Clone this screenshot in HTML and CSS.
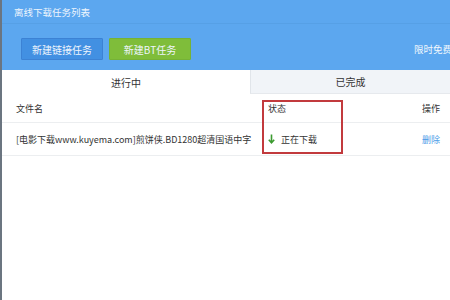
FILE: index.html
```html
<!DOCTYPE html>
<html lang="zh-CN">
<head>
    <meta charset="UTF-8">
    <title>离线下载任务列表</title>
    <link rel="stylesheet" href="styles.css">
</head>
<body>
    <div class="page">
        <header class="top">
            <div class="top-title">离线下载任务列表</div>
            <div class="toolbar">
                <button class="btn btn-blue">新建链接任务</button>
                <button class="btn btn-green">新建BT任务</button>
                <span class="free">限时免费</span>
            </div>
        </header>

        <div class="tabs">
            <div class="tab active">进行中</div>
            <div class="tab">已完成</div>
        </div>

        <div class="task-table">
            <div class="row head">
                <span class="col-name">文件名</span>
                <span class="col-status">状态</span>
                <span class="col-op">操作</span>
            </div>
            <div class="row">
                <span class="col-name">[电影下载www.kuyema.com]煎饼侠.BD1280超清国语中字</span>
                <span class="col-status">
                    <svg class="arrow" width="7" height="10" viewBox="0 0 7 10">
                        <path d="M3.5 0.5 V8.5 M0.8 5.8 L3.5 8.8 L6.2 5.8" fill="none" stroke="#3b9a2f" stroke-width="1.6"/>
                    </svg>
                    正在下载
                </span>
                <span class="col-op"><a class="del">删除</a></span>
            </div>
            <div class="mark"></div>
        </div>
    </div>
</body>
</html>
```

FILE: styles.css
```css
body {
    margin: 0;
    padding: 0;
    font-family: "Noto Sans CJK SC", "Noto Sans", sans-serif;
    font-size: 9.5px;
    color: #333;
    background: #fff;
}

.page {
    width: 448px;
    height: 300px;
    border-left: 2px solid #6b7580;
    overflow: hidden;
}

.top {
    background-color: #5ca7ef;
    height: 70px;
}

.top-title {
    height: 23px;
    line-height: 25px;
    padding-left: 12px;
    color: #eef5fd;
    border-bottom: 1px solid #56a0e6;
}

.toolbar {
    display: flex;
    align-items: center;
    gap: 6px;
    padding: 14px 0 0 19px;
}

.btn {
    width: 82px;
    height: 22px;
    font-family: inherit;
    font-size: 10px;
    color: #eef5fd;
    border-radius: 1px;
    padding: 0;
}

.btn-blue {
    background-color: #4290e2;
    border: 1px solid #3c82d4;
}

.btn-green {
    background-color: #7fbd3a;
    border: 1px solid #76b236;
}

.free {
    margin-left: auto;
    margin-right: -2px;
    color: #f2f7fd;
    font-size: 9.5px;
}

.tabs {
    display: grid;
    grid-template-columns: 248px 1fr;
    height: 24px;
}

.tab {
    display: flex;
    align-items: center;
    justify-content: center;
    font-size: 10px;
    background-color: #f1f4f8;
    border-left: 1px solid #e1e5ea;
    border-bottom: 1px solid #e6e9ed;
}

.tab.active {
    background-color: #fff;
    border: none;
}

.task-table {
    position: relative;
    font-size: 9px;
}

.row {
    display: grid;
    grid-template-columns: 252px 154px 1fr;
    align-items: center;
    height: 32px;
    padding-left: 14px;
    border-bottom: 1px solid #eceef0;
}

.row.head {
    height: 28px;
}

.col-status {
    display: flex;
    align-items: center;
    gap: 6px;
}

.arrow {
    display: block;
}

.del {
    color: #4c9be8;
}

/* annotation box drawn over the status column */
.mark {
    position: absolute;
    left: 260px;
    top: 6px;
    width: 77px;
    height: 50px;
    border: 2px solid #c23a3d;
}
```
